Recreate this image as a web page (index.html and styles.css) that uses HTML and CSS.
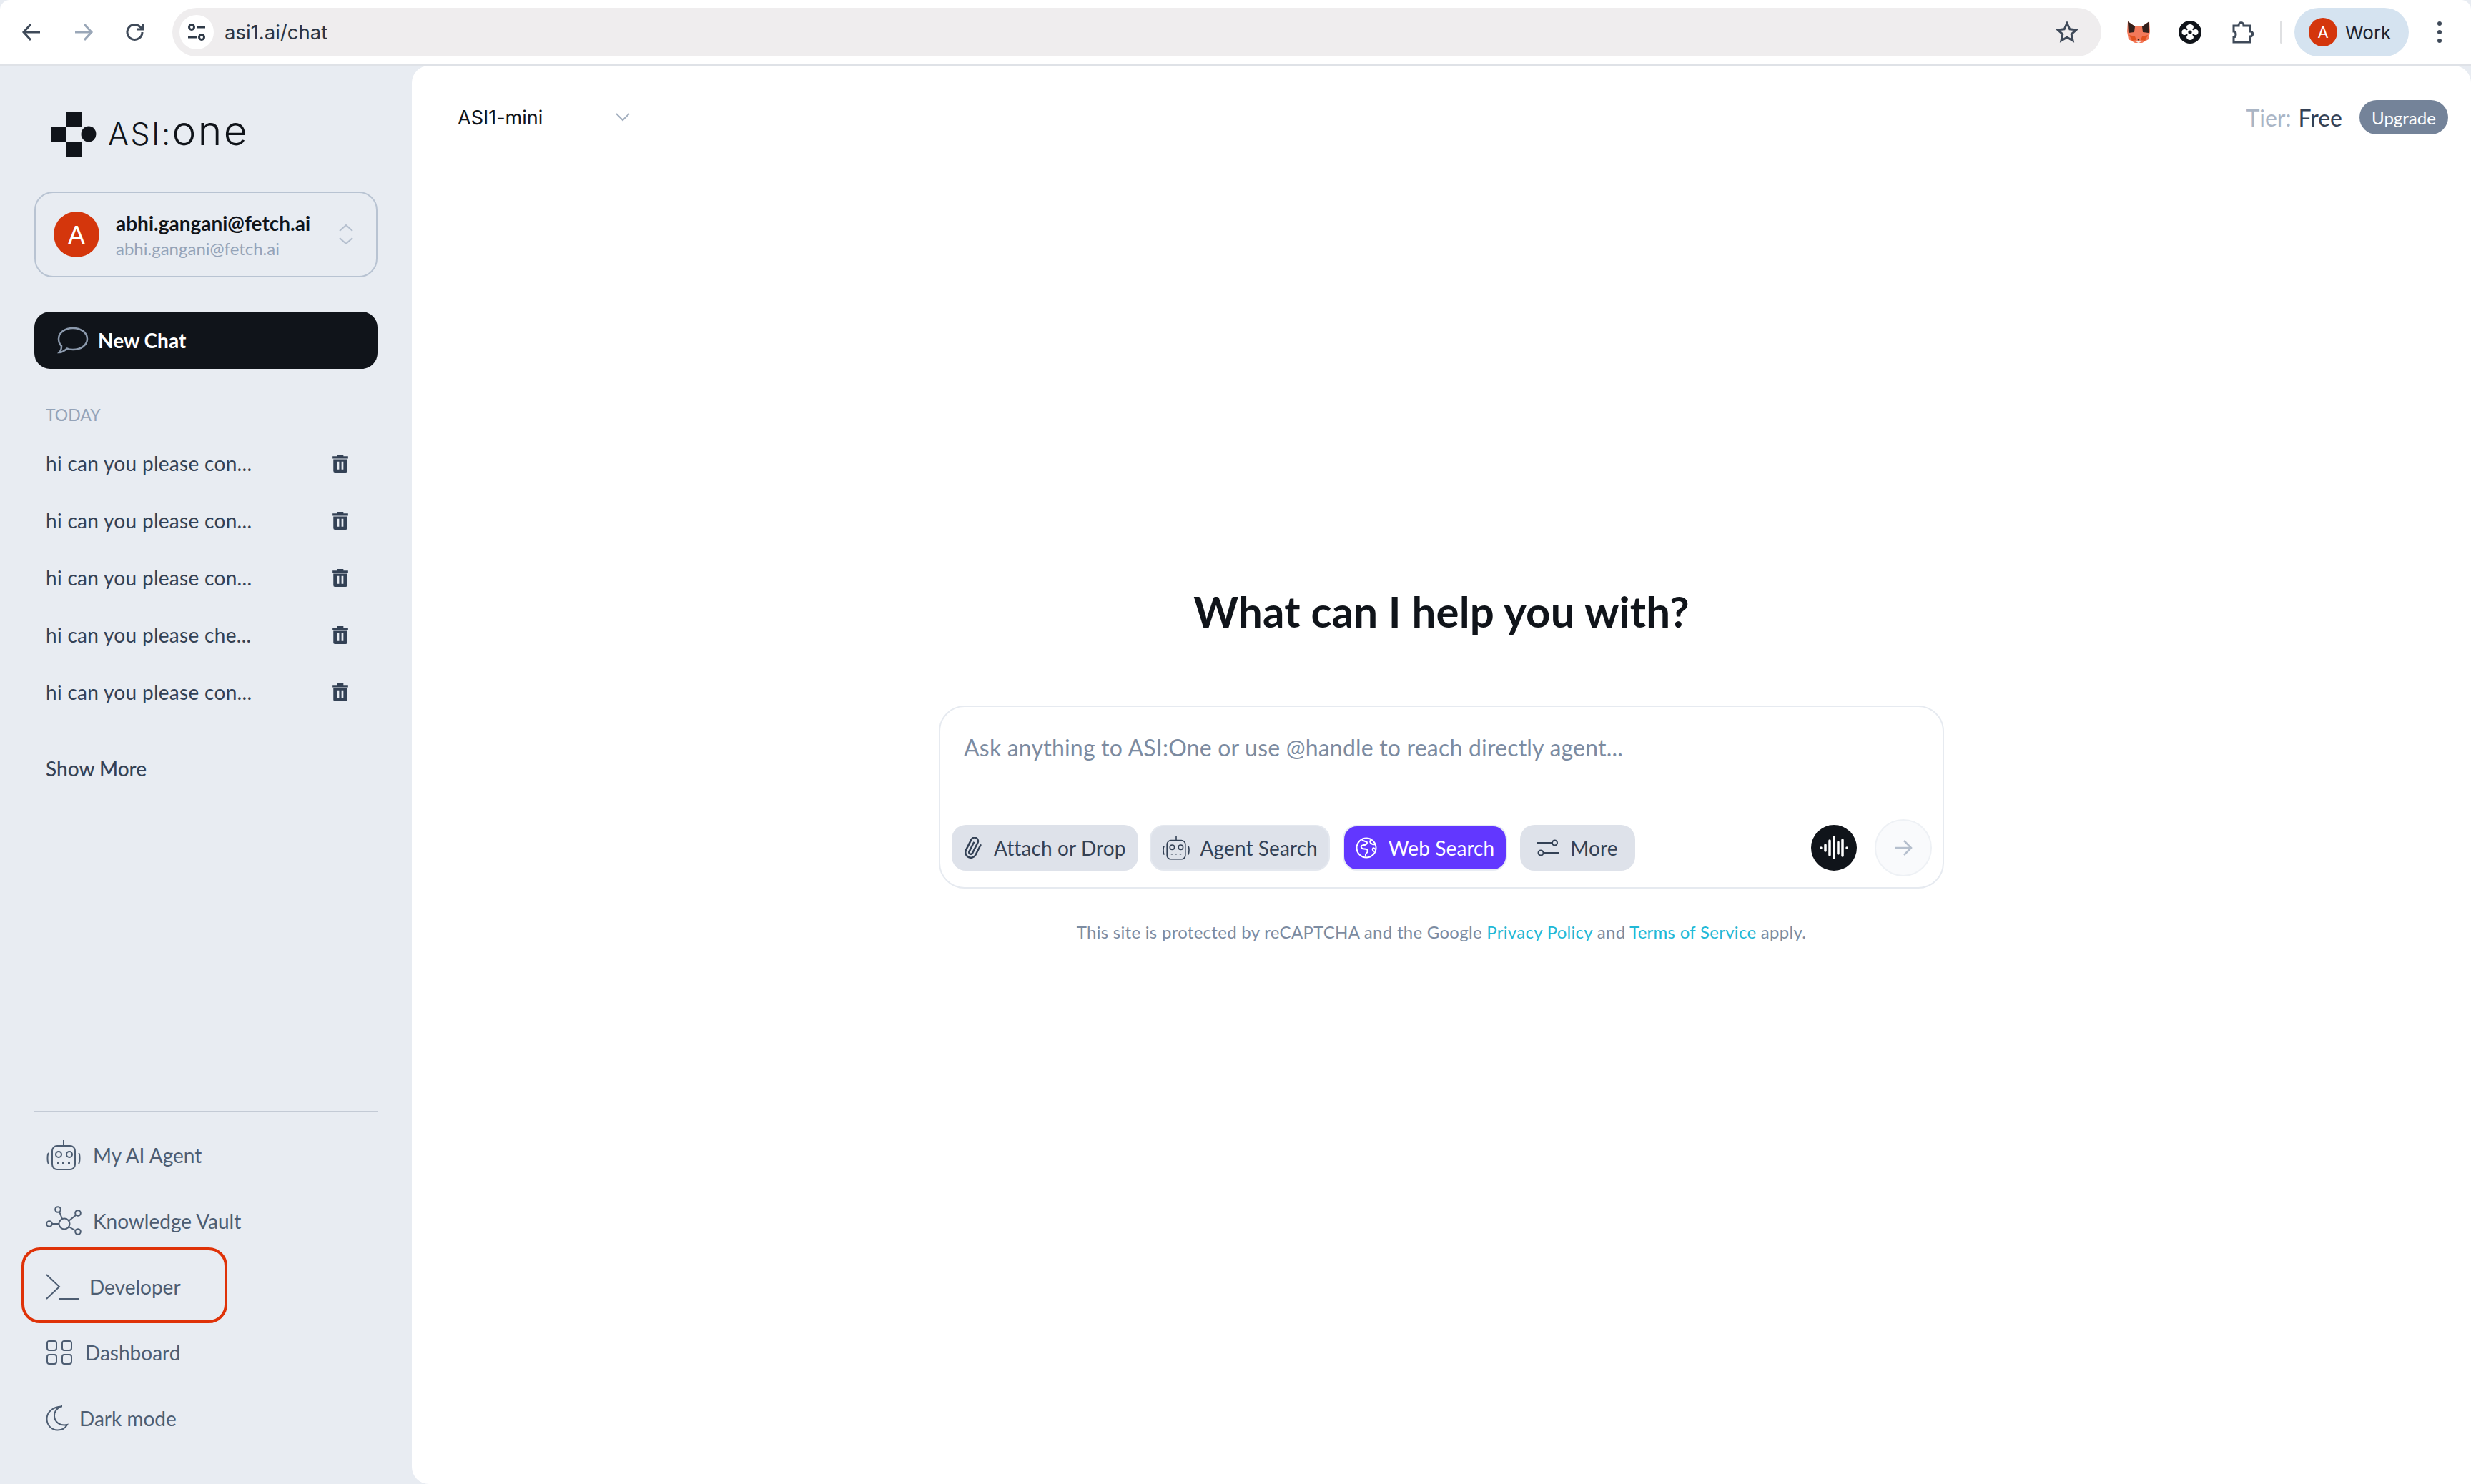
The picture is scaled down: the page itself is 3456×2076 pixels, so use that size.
FILE: index.html
```html
<!DOCTYPE html>
<html lang="en">
<head>
  <meta charset="UTF-8">
  <title>ASI:One</title>
  <link rel="stylesheet" href="styles.css">
</head>
<body>

  <header class="toolbar">
    <svg class="tb-icon back" width="28" height="28" viewBox="0 0 28 28"><path d="M26 14H3M13 3L3 14l10 11"/></svg>
    <svg class="tb-icon forward" width="28" height="28" viewBox="0 0 28 28"><path d="M2 14h23M15 3l10 11-10 11"/></svg>
    <svg class="tb-icon reload" width="28" height="28" viewBox="0 0 28 28"><path d="M24 14a10.500 10.500 0 1 1-3-7.400L24 9.500"/><path d="M25 2v8h-8"/></svg>

    <div class="omnibox">
      <span class="site-settings">
        <svg width="26" height="26" viewBox="0 0 26 26"><circle cx="6" cy="6" r="3.500"/><path d="M13 6h12M1 20h12"/><circle cx="20" cy="20" r="3.500"/></svg>
      </span>
      <span class="url">asi1.ai/chat</span>
      <svg class="star" width="32" height="32" viewBox="0 0 32 32"><path d="M16 3.500l3.800 8.300 9 1-6.700 6.100 1.900 8.900-8-4.600-8 4.600 1.900-8.900-6.700-6.100 9-1z"/></svg>
    </div>

    <svg class="ext fox" width="32" height="32" viewBox="0 0 32 32">
      <path d="M1 1l10 7h10l10-7 1 14-2 11-9 5h-10l-9-5-2-11z" fill="#f4795a"/>
      <path d="M1 1l10 7-1 8-8 1zM31 1l-10 7 1 8 8 1z" fill="#33201c"/>
      <path d="M3 20l8 2 2 5-6 1zM29 20l-8 2-2 5 6 1z" fill="#e2521f"/>
      <path d="M11 28h10l-5 3.500z" fill="#f3efe9"/>
      <path d="M14.500 26h3l-1.500 2z" fill="#33201c"/>
    </svg>
    <svg class="ext orb" width="32" height="32" viewBox="0 0 32 32">
      <circle cx="16" cy="16" r="16" fill="#10141a"/>
      <circle cx="8.500" cy="16" r="4" fill="#fff"/>
      <circle cx="23.500" cy="16" r="4" fill="#fff"/>
      <ellipse cx="16" cy="9" rx="5" ry="4" fill="#fff"/>
      <ellipse cx="16" cy="23" rx="5" ry="4" fill="#fff"/>
      <circle cx="16" cy="16" r="5" fill="#fff"/>
      <circle cx="16" cy="16" r="2.600" fill="#10141a"/>
      <path d="M11.500 12.500l-1.500-1.500M20.500 12.500l1.500-1.500M11.500 19.500L10 21M20.500 19.500l1.500 1.500" stroke="#10141a" stroke-width="2"/>
    </svg>
    <svg class="tb-icon puzzle" width="32" height="34" viewBox="0 0 32 34"><path d="M3 8h7c0-6 7-6 7 0h9v8c5 0 5 7 0 7v8H3v-7c4 0 4-8 0-8z"/></svg>
    <span class="tb-sep"></span>
    <div class="profile">
      <span class="avatar avatar-sm">A</span>
      <span>Work</span>
    </div>
    <span class="dots"><i></i><i></i><i></i></span>
  </header>

  <div class="app">
    <aside class="sidebar">
      <div class="logo">
        <svg width="63" height="63" viewBox="0 0 63 63" fill="#10141a">
          <rect x="21" y="0" width="21" height="21"/>
          <rect x="0" y="21" width="21" height="21"/>
          <rect x="21" y="42" width="21" height="21"/>
          <ellipse cx="52" cy="31.500" rx="10.500" ry="11"/>
        </svg>
        <span class="logo-text">ASI:<span class="logo-one">one</span></span>
      </div>

      <div class="account">
        <span class="avatar">A</span>
        <div class="account-text">
          <div class="account-name">abhi.gangani@fetch.ai</div>
          <div class="account-mail">abhi.gangani@fetch.ai</div>
        </div>
        <svg class="updown" width="20" height="28" viewBox="0 0 20 28"><path d="M1 9l9-8 9 8M1 19l9 8 9-8"/></svg>
      </div>

      <button class="new-chat">
        <svg width="44" height="38" viewBox="0 0 44 38"><path d="M22 2c11 0 20 6 20 15s-9 15-20 15c-3 0-6-.5-8-1.500C11 33 7 36 3 36c2-2 3-5 3-9-2.500-2.500-4-6-4-10C2 8 11 2 22 2z"/></svg>
        New Chat
      </button>

      <div class="section-label">TODAY</div>

      <ul class="chats">
        <li><span>hi can you please con...</span><svg class="trash" width="24" height="26" viewBox="0 0 22 24"><use href="#trash"/></svg></li>
        <li><span>hi can you please con...</span><svg class="trash" width="24" height="26" viewBox="0 0 22 24"><use href="#trash"/></svg></li>
        <li><span>hi can you please con...</span><svg class="trash" width="24" height="26" viewBox="0 0 22 24"><use href="#trash"/></svg></li>
        <li><span>hi can you please che...</span><svg class="trash" width="24" height="26" viewBox="0 0 22 24"><use href="#trash"/></svg></li>
        <li><span>hi can you please con...</span><svg class="trash" width="24" height="26" viewBox="0 0 22 24"><use href="#trash"/></svg></li>
      </ul>

      <div class="show-more">Show More</div>

      <nav class="side-nav">
        <a class="nav-item">
          <svg width="50" height="42" viewBox="0 0 50 42"><use href="#robot"/></svg>
          My AI Agent
        </a>
        <a class="nav-item">
          <svg width="50" height="42" viewBox="0 0 50 42"><circle cx="26" cy="25" r="7.500"/><circle cx="17" cy="5" r="3.800"/><circle cx="45" cy="10" r="3.800"/><circle cx="5" cy="25" r="3.800"/><circle cx="45" cy="36" r="3.800"/><path d="M19 8l4 10M42 13l-10 8M9 25h9.500M32 29l9 5"/></svg>
          Knowledge Vault
        </a>
        <a class="nav-item nav-dev">
          <svg width="46" height="36" viewBox="0 0 46 36"><path d="M1 1l18 17L1 35M19 35h27"/></svg>
          Developer
          <span class="highlight"></span>
        </a>
        <a class="nav-item nav-dash">
          <svg width="38" height="36" viewBox="0 0 38 36"><rect x="2" y="2" width="13" height="13" rx="3"/><rect x="23" y="2" width="13" height="13" rx="3"/><rect x="2" y="21" width="13" height="13" rx="3"/><rect x="23" y="21" width="13" height="13" rx="3"/></svg>
          Dashboard
        </a>
        <a class="nav-item nav-dark">
          <svg width="32" height="36" viewBox="0 0 32 36"><path d="M22 1.500C10 2 1.500 9 1.500 19c0 9 7 15.500 15 15.500 6 0 11-3 13.500-7.500-9 2-18-3-18-12.500 0-6 4-11 10-13.500z"/></svg>
          Dark mode
        </a>
      </nav>
    </aside>

    <main class="main">
      <div class="topbar">
        <div class="model">
          <span>ASI1-mini</span>
          <svg width="20" height="12" viewBox="0 0 20 12"><path d="M1 1l9 9 9-9"/></svg>
        </div>
        <div class="tier">
          <span class="tier-label">Tier:</span> <span class="tier-value">Free</span>
          <span class="upgrade">Upgrade</span>
        </div>
      </div>

      <section class="center">
        <h1>What can I help you with?</h1>

        <div class="composer">
          <div class="placeholder">Ask anything to ASI:One or use @handle to reach directly agent...</div>
          <div class="composer-row">
            <button class="chip chip-attach">
              <svg width="30" height="30" viewBox="0 0 24 24"><path transform="rotate(-18 12 12)" d="M21.440 11.050l-9.190 9.190a6 6 0 0 1-8.490-8.490l9.190-9.190a4 4 0 0 1 5.660 5.660l-9.200 9.190a2 2 0 0 1-2.830-2.830l8.490-8.480"/></svg>
              Attach or Drop
            </button>
            <button class="chip chip-agent">
              <svg width="40" height="34" viewBox="0 0 50 42"><use href="#robot"/></svg>
              Agent Search
            </button>
            <button class="chip chip-web">
              <svg width="30" height="30" viewBox="0 0 30 30"><circle cx="15" cy="15" r="13.500"/><path d="M9 3.500c1 2 4 2 6 3s1 3-1 4-5 0-6 2 1 4 4 4 5 1 5 3-3 3-3 5 0 3 0 3M21 4c-1 2-1 4 1 5s3 2 5 1M28 17c-2-1-3-3-4-1s1 4 2 4"/></svg>
              Web Search
            </button>
            <button class="chip chip-more">
              <svg width="30" height="26" viewBox="0 0 30 26"><circle cx="24.500" cy="6" r="3.500"/><circle cx="5" cy="20" r="3.500"/><path d="M0 6h21M9 20h21"/></svg>
              More
            </button>
            <span class="voice">
              <svg width="40" height="32" viewBox="0 0 40 32"><path d="M2 16v.1M8 12v8M14 6v20M20 1v30M26 8v16M32 5v22M38 16v.1"/></svg>
            </span>
            <span class="send">
              <svg width="26" height="24" viewBox="0 0 26 24"><path d="M1 12h23M14 2l10 10-10 10"/></svg>
            </span>
          </div>
        </div>

        <p class="legal">This site is protected by reCAPTCHA and the Google <a>Privacy Policy</a> and <a>Terms of Service</a> apply.</p>
      </section>
    </main>
  </div>

  <!-- shared icons -->
  <svg class="defs" width="0" height="0">
    <symbol id="trash" viewBox="0 0 22 24">
      <path d="M7 3V1h8v2h6v3H1V3zM2 7h18v15a2 2 0 0 1-2 2H4a2 2 0 0 1-2-2z" fill="#334155"/>
      <path d="M7 10h2.500v10H7zM12.500 10H15v10h-2.500z" fill="#e8ecf2"/>
    </symbol>
    <symbol id="robot" viewBox="0 0 50 42">
      <rect x="9" y="8" width="32" height="33" rx="7" fill="none" stroke="currentColor" stroke-width="2"/>
      <path d="M25 0v8M4 18c-2 2-2 12 0 15M46 18c2 2 2 12 0 15M16 32h3M23 32h3M31 32h3" fill="none" stroke="currentColor" stroke-width="2"/>
      <circle cx="18" cy="20" r="4" fill="none" stroke="currentColor" stroke-width="2"/>
      <circle cx="33" cy="20" r="4" fill="none" stroke="currentColor" stroke-width="2"/>
    </symbol>
  </svg>

</body>
</html>
```

FILE: styles.css
```css
* {
  box-sizing: border-box;
}

html, body {
  margin: 0;
  padding: 0;
  height: 2076px;
  overflow: hidden;
}

body {
  font-family: Lato, "Open Sans", sans-serif;
  background: #e8ecf2;
  color: #334155;
  display: flex;
  flex-direction: column;
}

svg {
  flex: none;
  display: block;
}

.defs {
  position: absolute;
}

/* browser toolbar */
.toolbar {
  height: 92px;
  flex: none;
  display: flex;
  align-items: center;
  background: #fff;
  border-bottom: 2px solid #dfe2e7;
  border-radius: 14px 14px 0 0;
}

.tb-icon {
  fill: none;
  stroke: #3f4a59;
  stroke-width: 3;
}

.back { margin-left: 30px; }
.forward { margin-left: 45px; stroke: #9aa7b8; }
.reload { margin-left: 44px; }

.omnibox {
  width: 2698px;
  height: 68px;
  margin-left: 38px;
  padding: 0 10px;
  display: flex;
  align-items: center;
  background: #efedee;
  border-radius: 34px;
}

.site-settings {
  width: 48px;
  height: 48px;
  border-radius: 50%;
  background: #fff;
  display: flex;
  align-items: center;
  justify-content: center;
}

.site-settings svg {
  fill: none;
  stroke: #2f3a48;
  stroke-width: 3;
}

.url {
  margin-left: 15px;
  font-family: Inter, sans-serif;
  font-size: 27.500px;
  color: #2c3542;
}

.star {
  margin-left: auto;
  margin-right: 22px;
  fill: none;
  stroke: #3f4a59;
  stroke-width: 3;
}

.fox { margin-left: 36px; }
.orb { margin-left: 40px; }
.puzzle { margin-left: 42px; }

.tb-sep {
  width: 3px;
  height: 32px;
  margin-left: 36px;
  background: #dfe0e2;
  border-radius: 2px;
}

.profile {
  width: 160px;
  height: 68px;
  margin-left: 17px;
  padding-left: 20px;
  display: flex;
  align-items: center;
  gap: 11px;
  background: #d5e3f0;
  border-radius: 34px;
  font-family: Inter, sans-serif;
  font-size: 26px;
  color: #1b2430;
}

.dots {
  margin-left: 40px;
  display: flex;
  flex-direction: column;
  gap: 6px;
}

.dots i {
  width: 6px;
  height: 6px;
  border-radius: 50%;
  background: #3f4a59;
}

.avatar {
  width: 64px;
  height: 64px;
  flex: none;
  display: flex;
  align-items: center;
  justify-content: center;
  border-radius: 50%;
  background: #d4360c;
  color: #fff;
  font-size: 36px;
}

.avatar-sm {
  width: 40px;
  height: 40px;
  font-size: 22px;
}

/* page */
.app {
  flex: 1;
  display: flex;
  min-height: 0;
}

.sidebar {
  width: 576px;
  flex: none;
  padding: 0 48px;
  display: flex;
  flex-direction: column;
}

.logo {
  height: 63px;
  margin: 64px 0 0 24px;
  display: flex;
  align-items: center;
  gap: 16px;
  color: #10141a;
}

.logo-text {
  padding-bottom: 5px;
  font-family: Inter, sans-serif;
  font-weight: 300;
  font-size: 43px;
  line-height: 58px;
  letter-spacing: 2.500px;
}

.logo-one {
  font-size: 57px;
  letter-spacing: 2.500px;
}

.account {
  height: 120px;
  margin-top: 49px;
  padding: 0 32px 0 25px;
  display: flex;
  align-items: center;
  border: 2px solid #b8c3d2;
  border-radius: 26px;
}

.account-text {
  margin-left: 23px;
}

.account-name {
  font-size: 28px;
  font-weight: 700;
  color: #10141a;
}

.account-mail {
  margin-top: 4px;
  font-size: 24px;
  color: #94a3b8;
}

.updown {
  margin-left: auto;
  fill: none;
  stroke: #b4bfce;
  stroke-width: 2;
}

.new-chat {
  height: 80px;
  margin-top: 48px;
  padding: 0 0 0 32px;
  display: flex;
  align-items: center;
  gap: 13px;
  border: none;
  border-radius: 22px;
  background: #10141a;
  color: #fff;
  font-family: inherit;
  font-size: 28px;
  font-weight: 700;
}

.new-chat svg {
  fill: none;
  stroke: #8b99ac;
  stroke-width: 2.500;
}

.section-label {
  margin: 49px 0 0 16px;
  font-size: 23px;
  line-height: 30px;
  color: #94a3b8;
}

.chats {
  list-style: none;
  margin: 13px 0 0;
  padding: 0;
}

.chats li {
  height: 80px;
  padding: 0 40px 0 16px;
  display: flex;
  align-items: center;
  justify-content: space-between;
  font-size: 28px;
  letter-spacing: 0.300px;
}

.show-more {
  margin: 47px 0 0 16px;
  font-size: 28px;
  font-weight: 500;
  line-height: 40px;
}

.side-nav {
  margin-top: auto;
  padding-top: 14px;
  padding-bottom: 46px;
  border-top: 2px solid #c3cad5;
}

.nav-item {
  height: 92px;
  padding-left: 16px;
  position: relative;
  display: flex;
  align-items: center;
  gap: 16px;
  font-size: 28px;
  color: #4d5d72;
}

.nav-item svg {
  fill: none;
  stroke: #4d5d72;
  stroke-width: 2;
}

.nav-dash { gap: 17px; }
.nav-dark { gap: 15px; }
.nav-dev { gap: 15px; }

/* red annotation box round the Developer row */
.highlight {
  position: absolute;
  left: -18px;
  top: -9px;
  width: 288px;
  height: 106px;
  border: 4px solid #df3208;
  border-radius: 26px;
}

.main {
  flex: 1;
  display: flex;
  flex-direction: column;
  background: #fff;
  border-radius: 24px 24px 0 24px;
}

.topbar {
  height: 144px;
  flex: none;
  padding: 0 32px 0 64px;
  display: flex;
  align-items: center;
  justify-content: space-between;
}

.model {
  width: 241px;
  display: flex;
  align-items: center;
  justify-content: space-between;
  font-family: Inter, sans-serif;
  font-size: 27px;
  color: #10141a;
}

.model svg {
  fill: none;
  stroke: #a3afbf;
  stroke-width: 2;
}

.tier {
  display: flex;
  align-items: center;
  gap: 10px;
  font-size: 32px;
}

.tier-label { color: #aab5c5; }
.tier-value { color: #334155; }

.upgrade {
  height: 48px;
  width: 124px;
  margin-left: 14px;
  display: flex;
  align-items: center;
  justify-content: center;
  background: #748399;
  border-radius: 24px;
  font-size: 24px;
  color: #fff;
}

.center {
  display: flex;
  flex-direction: column;
  align-items: center;
}

h1 {
  margin: 581px 0 0;
  font-size: 60px;
  line-height: 76px;
  font-weight: 700;
  letter-spacing: 0.150px;
  color: #10141a;
}

.composer {
  width: 1406px;
  height: 256px;
  margin-top: 94px;
  padding: 0 15px 0 16px;
  border: 2px solid #e6eaf0;
  border-radius: 36px;
}

.placeholder {
  margin: 37px 0 0 17px;
  font-size: 32px;
  line-height: 40px;
  letter-spacing: 0.200px;
  color: #7c8ba1;
}

.composer-row {
  margin-top: 80px;
  display: flex;
  align-items: center;
  gap: 16px;
}

.chip {
  height: 64px;
  padding: 0 17px;
  display: flex;
  align-items: center;
  gap: 16px;
  border: none;
  border-radius: 20px;
  background: #dee2ea;
  color: #334155;
  font-family: inherit;
  font-size: 28px;
  letter-spacing: 0.100px;
}

.chip svg {
  fill: none;
  stroke: #334155;
  stroke-width: 2;
  color: #334155;
}

.chip-attach {
  padding-left: 15px;
  gap: 14px;
}

.chip-agent {
  padding: 0 15px;
  gap: 14px;
  border: 2px solid #e4e8ef;
}

.chip-web {
  margin-left: 2px;
  padding: 0 16px;
  border: 2px solid #e8ecf3;
  background: #6237ff;
  color: #fff;
}

.chip-web svg {
  stroke: #fff;
}

.chip-more {
  margin-left: 2px;
  padding: 0 24px;
}

.voice {
  width: 64px;
  height: 64px;
  margin-left: auto;
  display: flex;
  align-items: center;
  justify-content: center;
  border-radius: 50%;
  background: #10141a;
}

.voice svg {
  fill: none;
  stroke: #fff;
  stroke-width: 3.500;
  stroke-linecap: round;
}

.send {
  width: 80px;
  height: 80px;
  margin-left: 9px;
  display: flex;
  align-items: center;
  justify-content: center;
  border: 2px solid #eef1f5;
  border-radius: 50%;
  background: #f9fafc;
}

.send svg {
  fill: none;
  stroke: #b5bfcd;
  stroke-width: 2.500;
}

.legal {
  margin: 45px 0 0;
  font-size: 24px;
  line-height: 32px;
  letter-spacing: 0.280px;
  color: #7c8ba1;
}

.legal a {
  color: #22b8d6;
}
```
